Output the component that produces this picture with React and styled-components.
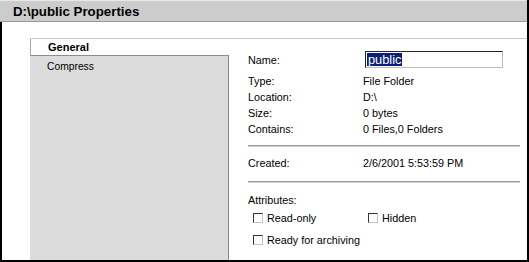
import React from 'react';
import styled, { createGlobalStyle } from 'styled-components';

const GlobalStyle = createGlobalStyle`
  html, body {
    margin: 0;
    padding: 0;
    background: #ffffff;
  }
  body {
    font-family: "Liberation Sans", Arial, sans-serif;
    font-size: 10.8px;
    color: #000;
  }
  * { box-sizing: border-box; }
`;

const Window = styled.div`
  width: 529px;
  height: 262px;
  display: flex;
  flex-direction: column;
  border-right: 2px solid #000;
  border-bottom: 2px solid #000;
  background: #fff;
`;

const TitleBar = styled.div`
  height: 22px;
  flex-shrink: 0;
  display: flex;
  align-items: center;
  padding-left: 13px;
  background: #cccccc;
  border-top: 1px solid #e8e8e8;
  border-bottom: 1px solid #9a9a9a;
  font-size: 13.3px;
  font-weight: bold;
`;

const Body = styled.div`
  flex: 1;
  display: flex;
  flex-direction: column;
  border-left: 2px solid #000;
  padding: 16px 0 0 28px;
`;

const Frame = styled.div`
  flex: 1;
  display: flex;
  border-top: 1px solid #c8c8c8;
`;

const TabColumn = styled.div`
  width: 199px;
  flex-shrink: 0;
  display: flex;
  flex-direction: column;
`;

const Tab = styled.div`
  height: ${p => (p.$active ? '17px' : '19px')};
  display: flex;
  align-items: center;
  padding-left: 17px;
  font-size: ${p => (p.$active ? '11px' : '10.3px')};
  font-weight: ${p => (p.$active ? 'bold' : 'normal')};
  background: ${p => (p.$active ? '#fff' : 'transparent')};
  border-left: ${p => (p.$active ? '1px solid #a8a8a8' : 'none')};
  border-bottom: ${p => (p.$active ? '1px solid #8c8c8c' : 'none')};
`;

const TabPanel = styled.div`
  flex: 1;
  background: #dcdcdc;
  border-right: 1px solid #8a8a8a;
  padding-top: 1px;
`;

const Content = styled.div`
  flex: 1;
  padding: 12px 7px 0 19px;
  display: flex;
  flex-direction: column;
`;

const Row = styled.div`
  display: grid;
  grid-template-columns: 115px 1fr;
  align-items: center;
  height: ${p => p.$h || 16}px;
  margin-top: ${p => p.$mt || 0}px;
`;

const NameInput = styled.div`
  margin-left: 2px;
  width: 138px;
  height: 17px;
  border-top: 1px solid #222;
  border-left: 1px solid #222;
  border-right: 1px solid #bdbdbd;
  border-bottom: 1px solid #bdbdbd;
  display: flex;
  align-items: center;
  padding-left: 1px;
`;

const Selected = styled.span`
  background: #0a1f78;
  color: #fff;
  font-size: 12.8px;
  line-height: 13px;
  padding: 0 1px;
`;

const Separator = styled.div`
  height: 2px;
  border-top: 1px solid #9c9c9c;
  border-bottom: 1px solid #cfcfcf;
  margin-top: ${p => p.$mt || 0}px;
`;

const Check = styled.label`
  display: flex;
  align-items: center;
  gap: 4px;
  padding-left: 5px;
`;

const Box = styled.span`
  width: 10px;
  height: 10px;
  border-top: 1px solid #333;
  border-left: 1px solid #333;
  border-right: 1px solid #c4c4c4;
  border-bottom: 1px solid #c4c4c4;
  background: #fff;
`;

const info = [
  ['Type:', 'File Folder'],
  ['Location:', 'D:\\'],
  ['Size:', '0 bytes'],
  ['Contains:', '0 Files,0 Folders'],
];

export default function App() {
  return (
    <>
      <GlobalStyle />
      <Window>
        <TitleBar>D:\public Properties</TitleBar>
        <Body>
          <Frame>
            <TabColumn>
              <Tab $active>General</Tab>
              <TabPanel>
                <Tab>Compress</Tab>
              </TabPanel>
            </TabColumn>
            <Content>
              <Row $h={17}>
                <span>Name:</span>
                <NameInput>
                  <Selected>public</Selected>
                </NameInput>
              </Row>
              {info.map(([label, value], i) => (
                <Row key={label} $mt={i === 0 ? 5 : 0}>
                  <span>{label}</span>
                  <span>{value}</span>
                </Row>
              ))}
              <Separator $mt={8} />
              <Row $mt={8}>
                <span>Created:</span>
                <span>2/6/2001 5:53:59 PM</span>
              </Row>
              <Separator $mt={10} />
              <Row $mt={9}>
                <span>Attributes:</span>
              </Row>
              <Row $mt={2}>
                <Check><Box />Read-only</Check>
                <Check><Box />Hidden</Check>
              </Row>
              <Row $mt={6}>
                <Check><Box />Ready for archiving</Check>
              </Row>
            </Content>
          </Frame>
        </Body>
      </Window>
    </>
  );
}
